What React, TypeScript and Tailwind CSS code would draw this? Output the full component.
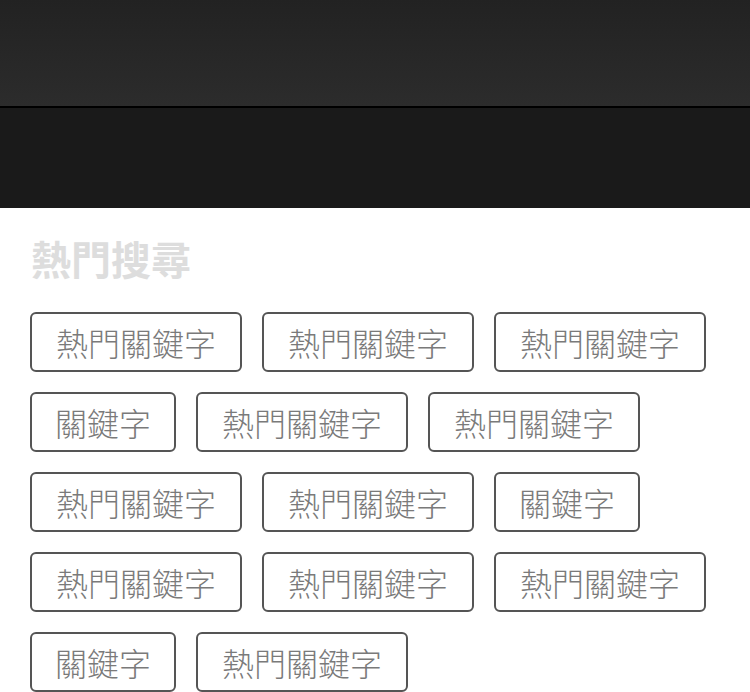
const keywords = [
  "熱門關鍵字",
  "熱門關鍵字",
  "熱門關鍵字",
  "關鍵字",
  "熱門關鍵字",
  "熱門關鍵字",
  "熱門關鍵字",
  "熱門關鍵字",
  "關鍵字",
  "熱門關鍵字",
  "熱門關鍵字",
  "熱門關鍵字",
  "關鍵字",
  "熱門關鍵字",
];

export default function App() {
  return (
    <div
      className="min-h-[692px] bg-white"
      style={{ fontFamily: '"Noto Sans CJK TC", "Noto Sans", sans-serif' }}
    >
      {/* Header */}
      <div className="h-[106px] bg-gradient-to-b from-[#222222] to-[#2c2c2c]" />
      <div className="h-[102px] border-t-2 border-black bg-[#1a1a1a]" />

      {/* Hot searches */}
      <div className="px-[30px] pt-[23px]">
        <h2 className="text-[40px] font-bold leading-[54px] text-[#dddddd] pl-[1px]">
          熱門搜尋
        </h2>
        <div className="mt-[27px] flex flex-wrap gap-x-[20px] gap-y-[20px]">
          {keywords.map((k, i) => (
            <button
              key={i}
              className={`h-[60px] rounded-[6px] border-2 border-[#555555] text-[32px] font-light leading-none text-[#7a7a7a] ${
                k.length === 3 ? "px-[23px]" : "px-[24px]"
              }`}
            >
              {k}
            </button>
          ))}
        </div>
      </div>
    </div>
  );
}
